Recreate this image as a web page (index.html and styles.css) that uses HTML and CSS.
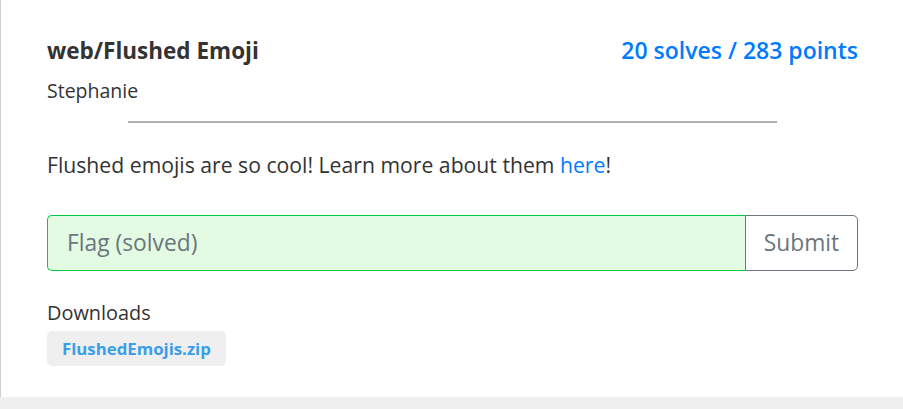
FILE: index.html
```html
<!DOCTYPE html>
<html>
<head>
<meta charset="utf-8">
<link rel="stylesheet" href="styles.css">
</head>
<body>
<div class="card">
  <div class="head">
    <div class="title">web/Flushed Emoji</div>
    <div class="stats">20 solves / 283 points</div>
  </div>
  <div class="author">Stephanie</div>
  <hr class="rule">
  <p class="desc">Flushed emojis are so cool! Learn more about them <a href="#">here</a>!</p>
  <form class="flag">
    <input class="flag-input" type="text" placeholder="Flag (solved)">
    <button class="submit" type="button">Submit</button>
  </form>
  <div class="dl-label">Downloads</div>
  <a class="dl" href="#">FlushedEmojis.zip</a>
</div>
</body>
</html>
```
FILE: styles.css
```css
html, body {
  margin: 0;
  padding: 0;
  background: #efefef;
  overflow: hidden;
}
body {
  font-family: "Open Sans", "Noto Sans", sans-serif;
  color: #333;
}
.card {
  box-sizing: border-box;
  width: 903px;
  height: 397px;
  background: #fff;
  border-left: 1px solid #cfcfcf;
  box-shadow: 0 1px 3px rgba(0,0,0,0.25);
  padding: 34px 45px 0 46px;
}
.head {
  display: flex;
  justify-content: space-between;
  align-items: baseline;
}
.title {
  font-weight: 700;
  font-size: 22.5px;
  color: #333;
}
.stats {
  font-size: 23px;
  font-weight: 600;
  color: #007bff;
}
.author {
  margin-top: 11px;
  font-size: 19.5px;
}
.rule {
  width: 80%;
  margin: 17px auto 0;
  border: 0;
  border-top: 2px solid #b0b0b0;
}
.desc {
  margin: 27px 0 0;
  font-size: 21.2px;
}
.desc a {
  color: #007bff;
  text-decoration: none;
}
.flag {
  display: flex;
  margin-top: 35.5px;
  height: 56px;
}
.flag-input {
  flex: 1;
  box-sizing: border-box;
  height: 56px;
  border: 1px solid #00cc44;
  border-right: 0;
  border-radius: 5px 0 0 5px;
  background: #e3fbe3;
  padding: 0 19px;
  font-family: inherit;
  font-size: 22.8px;
  outline: none;
}
.flag-input::placeholder {
  color: #6c757d;
}
.submit {
  box-sizing: border-box;
  width: 113px;
  height: 56px;
  background: #fff;
  border: 1px solid #6c757d;
  border-radius: 0 5px 5px 0;
  color: #6c757d;
  font-family: inherit;
  font-size: 22.8px;
  padding: 0;
}
.dl-label {
  margin-top: 28.5px;
  font-size: 19.9px;
}
.dl {
  display: inline-block;
  margin-top: 5.4px;
  background: #efefef;
  border-radius: 5px;
  padding: 6px 15px 6px 15px;
  color: #3a9ee8;
  font-weight: 700;
  font-size: 16.8px;
  text-decoration: none;
}
```
